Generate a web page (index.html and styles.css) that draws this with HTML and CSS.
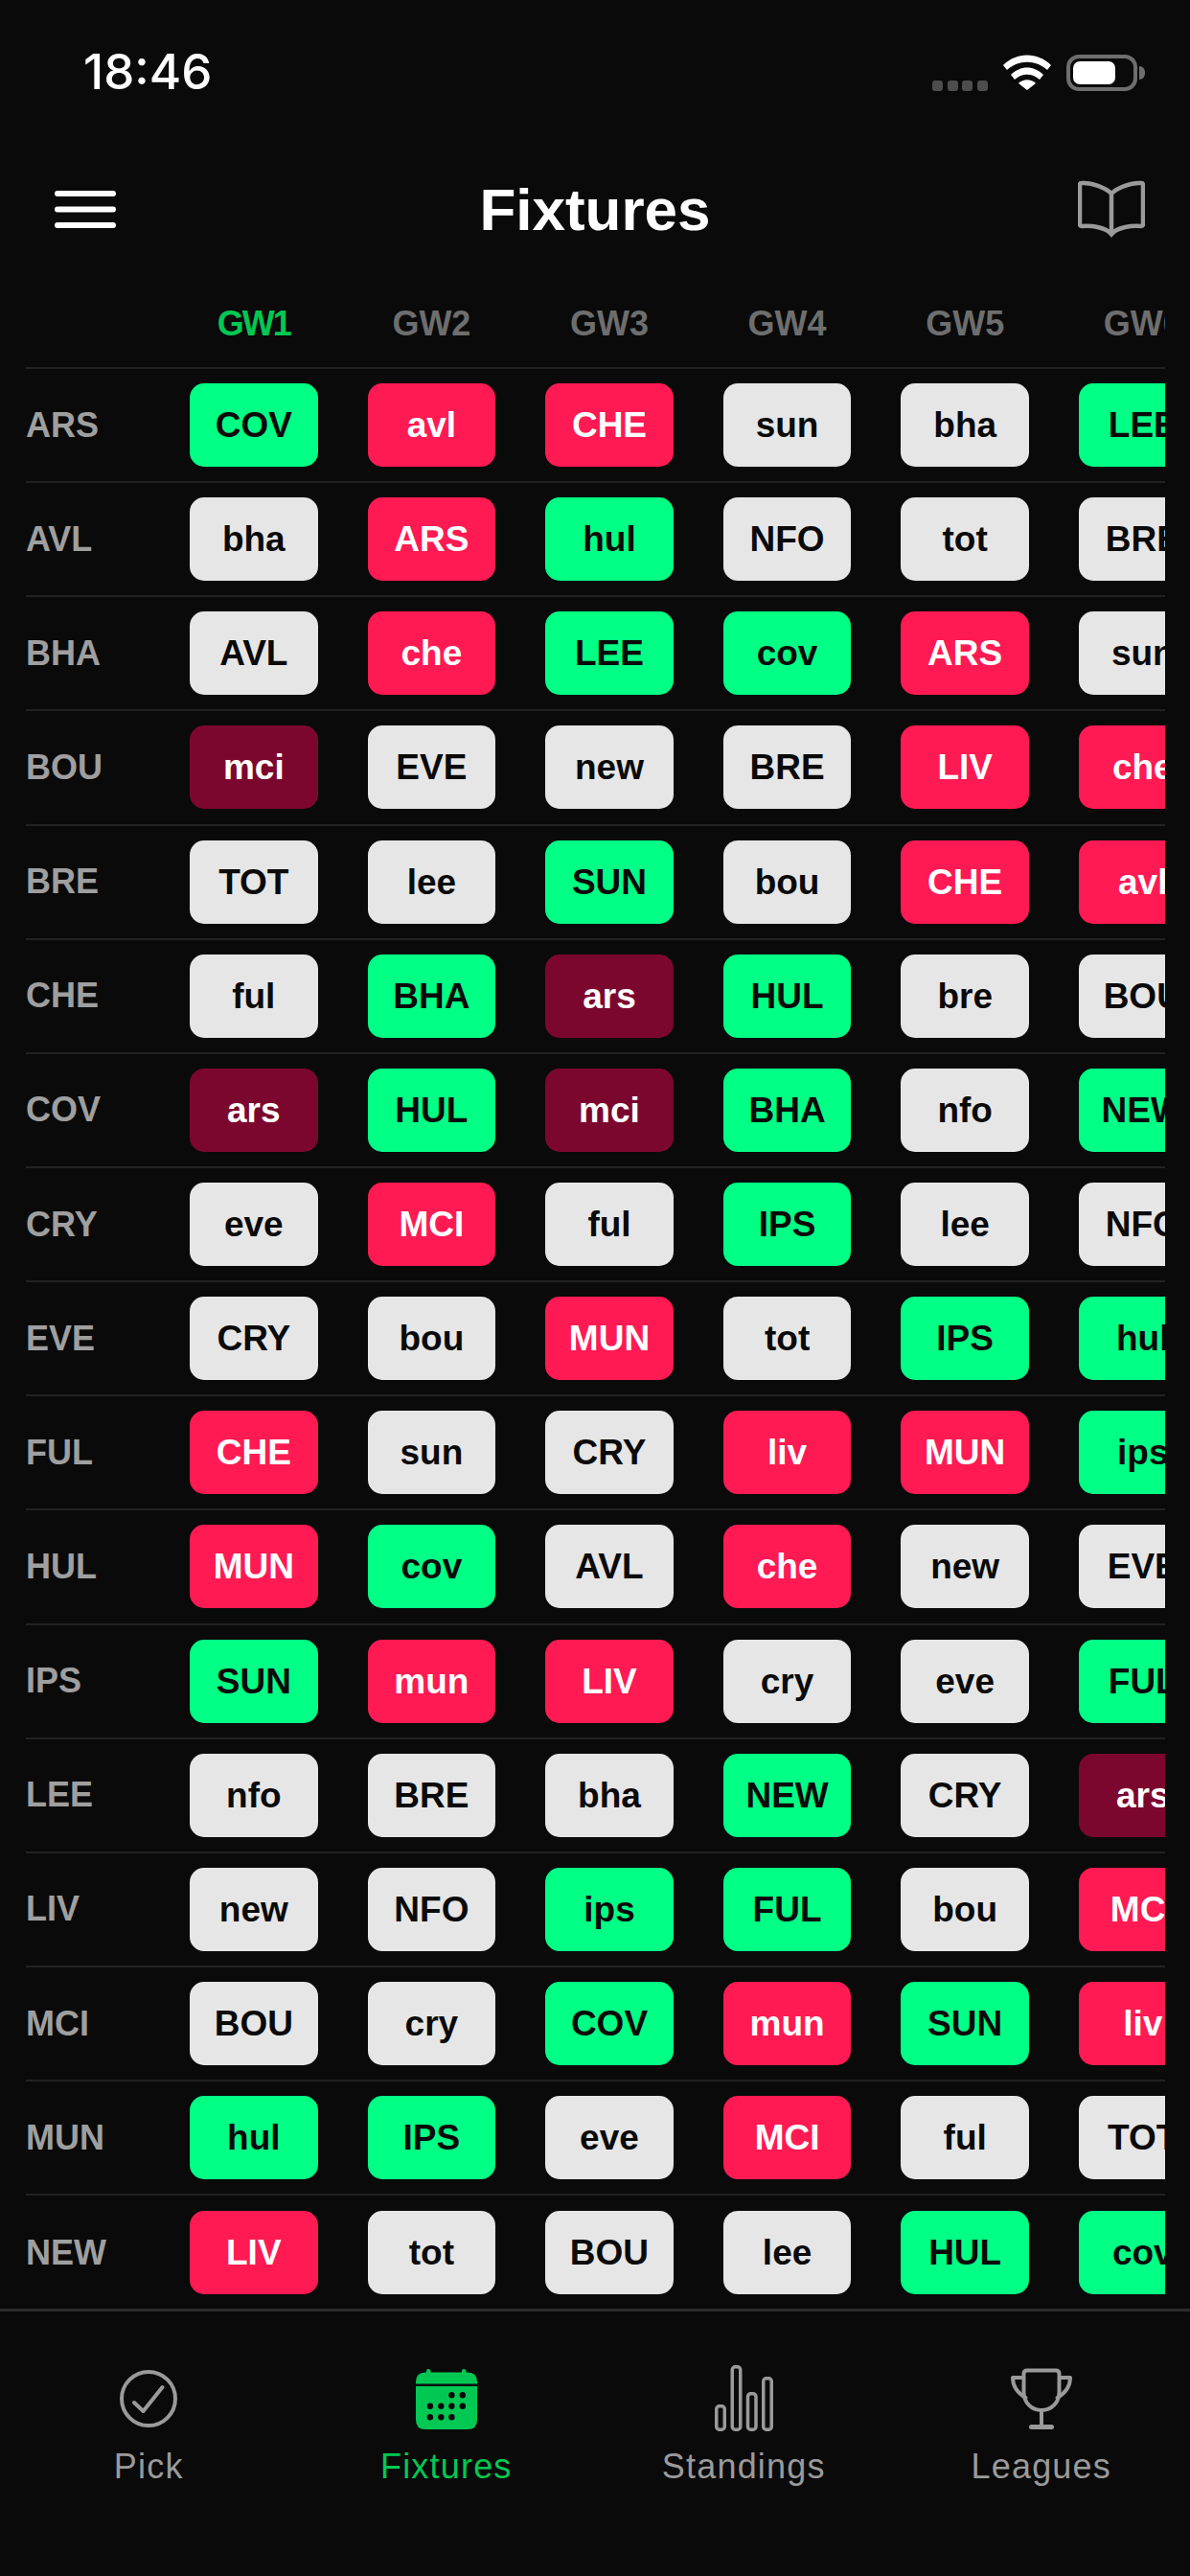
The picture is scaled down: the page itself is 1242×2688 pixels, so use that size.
FILE: index.html
```html
<!DOCTYPE html>
<html lang="en">
<head>
  <meta charset="UTF-8" />
  <title>Fixtures</title>
  <link rel="stylesheet" href="styles.css">
</head>
<body>
  <div class="status">
    <span class="time">18:46</span>
    <div class="status-icons">
      <div class="signal"><i></i><i></i><i></i><i></i></div>
      <svg class="wifi" width="50" height="37" viewBox="0 0 50 37">
        <path d="M0 11 C14 -3 36 -3 50 11 L46 16 C34 5 16 5 4 16 Z" fill="#fff"/>
        <path d="M8 21 C18 11 32 11 42 21 L38 26 C30 19 20 19 12 26 Z" fill="#fff"/>
        <path d="M16 30 C21 25 29 25 34 30 L25 37 Z" fill="#fff"/>
      </svg>
      <div class="battery"><div class="battery-body"><div class="battery-fill"></div></div><div class="battery-tip"></div></div>
    </div>
  </div>

  <header class="topbar">
    <svg class="menu" width="66" height="42" viewBox="0 0 66 42">
      <rect x="1" y="2" width="64" height="6" rx="3" fill="#fff"/>
      <rect x="1" y="18.500" width="64" height="6" rx="3" fill="#fff"/>
      <rect x="1" y="35" width="64" height="6" rx="3" fill="#fff"/>
    </svg>
    <h1>Fixtures</h1>
    <svg class="book" width="70" height="62" viewBox="0 0 70 62">
      <path d="M35 15 C29 9 14 3 4 4 Q2 4 2 6 L2 47 Q2 49 4 49 C14 48 28 50 35 57 C42 50 56 48 66 49 Q68 49 68 47 L68 6 Q68 4 66 4 C56 3 41 9 35 15 Z M35 15 L35 57" fill="none" stroke="#9a9a9a" stroke-width="4.5" stroke-linejoin="round"/>
      <path d="M29 54 L35 61 L41 54 Z" fill="#9a9a9a"/>
    </svg>
  </header>

  <main class="table">
    <div class="row head">
      <span></span>
      <span class="gw on">GW1</span><span class="gw">GW2</span><span class="gw">GW3</span><span class="gw">GW4</span><span class="gw">GW5</span><span class="gw">GW6</span>
    </div>
    <div class="row"><span class="team">ARS</span><b class="pill easy">COV</b><b class="pill hard">avl</b><b class="pill hard">CHE</b><b class="pill mid">sun</b><b class="pill mid">bha</b><b class="pill easy">LEE</b></div>
    <div class="row"><span class="team">AVL</span><b class="pill mid">bha</b><b class="pill hard">ARS</b><b class="pill easy">hul</b><b class="pill mid">NFO</b><b class="pill mid">tot</b><b class="pill mid">BRE</b></div>
    <div class="row"><span class="team">BHA</span><b class="pill mid">AVL</b><b class="pill hard">che</b><b class="pill easy">LEE</b><b class="pill easy">cov</b><b class="pill hard">ARS</b><b class="pill mid">sun</b></div>
    <div class="row"><span class="team">BOU</span><b class="pill worst">mci</b><b class="pill mid">EVE</b><b class="pill mid">new</b><b class="pill mid">BRE</b><b class="pill hard">LIV</b><b class="pill hard">che</b></div>
    <div class="row"><span class="team">BRE</span><b class="pill mid">TOT</b><b class="pill mid">lee</b><b class="pill easy">SUN</b><b class="pill mid">bou</b><b class="pill hard">CHE</b><b class="pill hard">avl</b></div>
    <div class="row"><span class="team">CHE</span><b class="pill mid">ful</b><b class="pill easy">BHA</b><b class="pill worst">ars</b><b class="pill easy">HUL</b><b class="pill mid">bre</b><b class="pill mid">BOU</b></div>
    <div class="row"><span class="team">COV</span><b class="pill worst">ars</b><b class="pill easy">HUL</b><b class="pill worst">mci</b><b class="pill easy">BHA</b><b class="pill mid">nfo</b><b class="pill easy">NEW</b></div>
    <div class="row"><span class="team">CRY</span><b class="pill mid">eve</b><b class="pill hard">MCI</b><b class="pill mid">ful</b><b class="pill easy">IPS</b><b class="pill mid">lee</b><b class="pill mid">NFO</b></div>
    <div class="row"><span class="team">EVE</span><b class="pill mid">CRY</b><b class="pill mid">bou</b><b class="pill hard">MUN</b><b class="pill mid">tot</b><b class="pill easy">IPS</b><b class="pill easy">hul</b></div>
    <div class="row"><span class="team">FUL</span><b class="pill hard">CHE</b><b class="pill mid">sun</b><b class="pill mid">CRY</b><b class="pill hard">liv</b><b class="pill hard">MUN</b><b class="pill easy">ips</b></div>
    <div class="row"><span class="team">HUL</span><b class="pill hard">MUN</b><b class="pill easy">cov</b><b class="pill mid">AVL</b><b class="pill hard">che</b><b class="pill mid">new</b><b class="pill mid">EVE</b></div>
    <div class="row"><span class="team">IPS</span><b class="pill easy">SUN</b><b class="pill hard">mun</b><b class="pill hard">LIV</b><b class="pill mid">cry</b><b class="pill mid">eve</b><b class="pill easy">FUL</b></div>
    <div class="row"><span class="team">LEE</span><b class="pill mid">nfo</b><b class="pill mid">BRE</b><b class="pill mid">bha</b><b class="pill easy">NEW</b><b class="pill mid">CRY</b><b class="pill worst">ars</b></div>
    <div class="row"><span class="team">LIV</span><b class="pill mid">new</b><b class="pill mid">NFO</b><b class="pill easy">ips</b><b class="pill easy">FUL</b><b class="pill mid">bou</b><b class="pill hard">MCI</b></div>
    <div class="row"><span class="team">MCI</span><b class="pill mid">BOU</b><b class="pill mid">cry</b><b class="pill easy">COV</b><b class="pill hard">mun</b><b class="pill easy">SUN</b><b class="pill hard">liv</b></div>
    <div class="row"><span class="team">MUN</span><b class="pill easy">hul</b><b class="pill easy">IPS</b><b class="pill mid">eve</b><b class="pill hard">MCI</b><b class="pill mid">ful</b><b class="pill mid">TOT</b></div>
    <div class="row"><span class="team">NEW</span><b class="pill hard">LIV</b><b class="pill mid">tot</b><b class="pill mid">BOU</b><b class="pill mid">lee</b><b class="pill easy">HUL</b><b class="pill easy">cov</b></div>
  </main>

  <nav class="tabs">
    <div class="tab">
      <svg width="66" height="72" viewBox="0 0 66 72">
        <circle cx="33" cy="37" r="28" fill="none" stroke="#9a9a9a" stroke-width="4"/>
        <path d="M18 41 L27.500 50 L47.500 25" fill="none" stroke="#9a9a9a" stroke-width="4" stroke-linecap="round" stroke-linejoin="round"/>
      </svg>
      <span>Pick</span>
    </div>
    <div class="tab on">
      <svg width="66" height="72" viewBox="0 0 66 72">
        <path d="M12 9.500 V8 Q12 6 14 6 Q16.500 6 16.500 8 V9.500 H49 V8 Q49 6 51 6 Q53.500 6 53.500 8 V9.500 H55 Q65 9.500 65 19.500 V21.500 H1 V19.500 Q1 9.500 11 9.500 Z" fill="#00c853"/>
        <path d="M1 24 H65 V59 Q65 69 55 69 H11 Q1 69 1 59 Z" fill="#00c853"/>
        <g fill="#0a0a0a">
          <circle cx="38.400" cy="33.300" r="3.200"/>
          <circle cx="49.800" cy="33.300" r="3.200"/>
          <circle cx="15.900" cy="44.700" r="3.200"/>
          <circle cx="27.300" cy="44.700" r="3.200"/>
          <circle cx="38.400" cy="44.700" r="3.200"/>
          <circle cx="49.800" cy="44.700" r="3.200"/>
          <circle cx="15.900" cy="56.300" r="3.200"/>
          <circle cx="27.300" cy="56.300" r="3.200"/>
          <circle cx="38.400" cy="56.300" r="3.200"/>
        </g>
      </svg>
      <span>Fixtures</span>
    </div>
    <div class="tab">
      <svg width="66" height="72" viewBox="0 0 66 72">
        <g fill="none" stroke="#9a9a9a" stroke-width="3.500">
          <rect x="4.750" y="44.750" width="8.500" height="24.500" rx="3"/>
          <rect x="21.250" y="3.750" width="8.500" height="65.500" rx="3"/>
          <rect x="37.500" y="31.750" width="8.500" height="37.500" rx="3"/>
          <rect x="53.750" y="15.750" width="8.500" height="53.500" rx="3"/>
        </g>
      </svg>
      <span>Standings</span>
    </div>
    <div class="tab">
      <svg width="66" height="72" viewBox="0 0 66 72">
        <g fill="none" stroke="#9a9a9a" stroke-width="4" stroke-linecap="round" stroke-linejoin="round">
          <path d="M18 7.500 H48 Q51.500 7.500 51.500 11 V30 C51.500 41 43.500 49 33 49 C22.500 49 14.500 41 14.500 30 V11 Q14.500 7.500 18 7.500 Z"/>
          <path d="M14 15 H3 C3 24 8 31 16.500 36"/>
          <path d="M52 15 H63 C63 24 58 31 49.500 36"/>
          <path d="M33 49 V66"/>
        </g>
        <path d="M22.500 66.500 H43.500" fill="none" stroke="#9a9a9a" stroke-width="5" stroke-linecap="round"/>
      </svg>
      <span>Leagues</span>
    </div>
  </nav>
</body>
</html>
```

FILE: styles.css
```css
* {
  box-sizing: border-box;
}
html, body {
  margin: 0;
  height: 2688px;
  overflow: hidden;
}
body {
  background: #0a0a0a;
  color: #fff;
  font-family: "Liberation Sans", Arial, sans-serif;
}

/* status bar */
.status {
  height: 150px;
  display: flex;
  justify-content: space-between;
  padding: 50px 47px 0 87px;
}
.time {
  font-size: 51px;
  line-height: 50px;
  font-weight: 500;
  font-family: Inter, sans-serif;
}
.status-icons {
  display: flex;
  align-items: flex-start;
  gap: 16px;
  height: 44px;
  margin-top: 7px;
}
.signal {
  display: flex;
  gap: 4.67px;
  margin-top: 27px;
}
.signal i {
  width: 11px;
  height: 11px;
  border-radius: 3px;
  background: #4d4d4d;
}
.battery {
  display: flex;
  align-items: center;
  height: 38px;
}
.battery-body {
  width: 74px;
  height: 38px;
  border: 4px solid #6e6e6e;
  border-radius: 13px;
  padding: 3px;
}
.battery-fill {
  width: 44px;
  height: 24px;
  background: #fff;
  border-radius: 7px;
}
.battery-tip {
  width: 6px;
  height: 14px;
  margin-left: 2px;
  background: #6e6e6e;
  border-radius: 0 7px 7px 0;
}

/* top bar */
.topbar {
  height: 136px;
  display: flex;
  align-items: center;
  justify-content: space-between;
  padding: 0 47px 0 56px;
  position: relative;
}
.topbar h1 {
  margin: 0;
  font-size: 62px;
  font-weight: 700;
  position: absolute;
  left: 0;
  right: 0;
  text-align: center;
}

/* fixture table */
.table {
  width: 1189px;
  height: 2123px;
  margin-left: 27px;
  overflow: hidden;
}
.row {
  display: grid;
  grid-template-columns: 119px repeat(6, 133.6px);
  column-gap: 52px;
  align-items: center;
  height: 119.15px;
  border-bottom: 2px solid #222;
  white-space: nowrap;
}
.row.head {
  height: 99px;
  padding-top: 7px;
}
.row:last-child {
  border-bottom: none;
}
.gw {
  font-size: 36px;
  font-weight: 700;
  color: #6e6e6e;
  text-align: center;
}
.gw.on {
  color: #00c853;
  letter-spacing: -2px;
}
.team {
  font-size: 36px;
  font-weight: 700;
  color: #9f9f9f;
}
.pill {
  height: 87px;
  line-height: 87px;
  text-align: center;
  border-radius: 15px;
  font-size: 37px;
  font-weight: 700;
}
.easy {
  background: #00ff85;
  color: #0a0a0a;
}
.mid {
  background: #e6e6e6;
  color: #0a0a0a;
}
.hard {
  background: #ff1a53;
  color: #fff;
}
.worst {
  background: #7c072e;
  color: #fff;
}

/* bottom tabs */
.tabs {
  height: 279px;
  border-top: 3px solid #2c2c2c;
  display: grid;
  grid-template-columns: repeat(4, 1fr);
  padding-top: 54px;
}
.tab {
  display: flex;
  flex-direction: column;
  align-items: center;
  color: #9a9a9a;
  font-size: 36px;
  letter-spacing: 1.2px;
  gap: 15px;
}
.tab.on {
  color: #00c853;
}
```
